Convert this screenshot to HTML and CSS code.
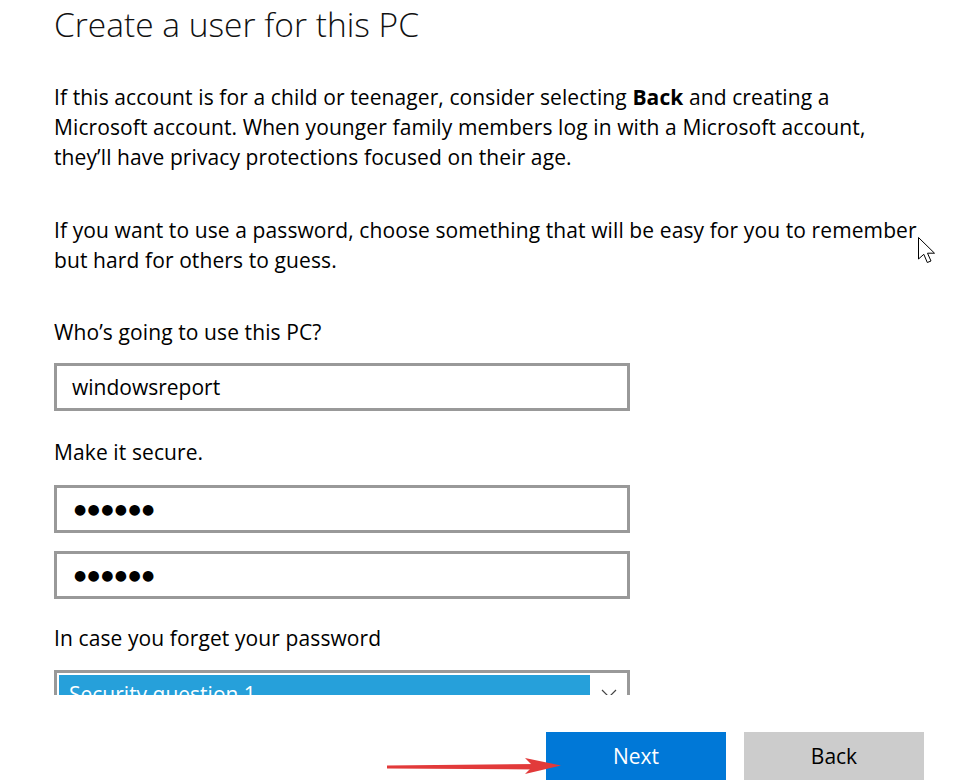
FILE: index.html
```html
<!DOCTYPE html>
<html>
    <head>
        <meta charset="utf-8">
        <title>Create a user for this PC</title>
        <link rel="stylesheet" href="styles.css">
    </head>
    <body>
        <div class="dialog">
            <div class="content">
                <h1 class="title">Create a user for this PC</h1>

                <p class="text">If this account is for a child or teenager, consider selecting <b>Back</b> and creating a<br>
                Microsoft account. When younger family members log in with a Microsoft account,<br>
                they’ll have privacy protections focused on their age.</p>

                <p class="text second">If you want to use a password, choose something that will be easy for you to remember<br>
                but hard for others to guess.</p>

                <div class="label">Who’s going to use this PC?</div>
                <div class="field">windowsreport</div>

                <div class="label">Make it secure.</div>
                <div class="field dots">●●●●●●</div>
                <div class="field dots">●●●●●●</div>

                <div class="label last">In case you forget your password</div>
                <div class="select">
                    <div class="select-value">Security question 1</div>
                    <div class="select-arrow">
                        <svg width="16" height="10" viewBox="0 0 16 10"><path d="M1 1 L8 8 L15 1" fill="none" stroke="#444" stroke-width="1.2"/></svg>
                    </div>
                </div>
            </div>
            <div class="footer">
                <button type="button" class="btn primary">Next</button>
                <button type="button" class="btn">Back</button>
            </div>
        </div>

        <svg class="cursor" width="22" height="30" viewBox="0 0 22 30">
            <path d="M1.5 1.5 L1.5 23 L6.8 18.3 L10.3 26.5 L14 25 L10.5 17.2 L17.5 17.2 Z" fill="#fff" stroke="#000" stroke-width="1" stroke-linejoin="miter"/>
        </svg>

        <svg class="arrow" width="180" height="20" viewBox="0 0 180 20">
            <path d="M0 8.5 L150 7 L150 12.5 L0 11.5 Z" fill="#e23a3a"/>
            <path d="M138 1 L174 8.5 L138 17 L146 9 Z" fill="#e23a3a"/>
        </svg>
    </body>
</html>
```

FILE: styles.css
```css
html, body {
    margin: 0;
    padding: 0;
    background-color: #fff;
    font-family: "Open Sans", "Noto Sans", sans-serif;
    color: #000;
}

.dialog {
    position: relative;
    width: 977px;
    height: 782px;
    display: flex;
    flex-direction: column;
}

.content {
    height: 695px;
    overflow: hidden;
    padding: 0 54px;
    box-sizing: border-box;
}

.title {
    margin: 0;
    padding-top: 4px;
    font-size: 33.5px;
    font-weight: 300;
    line-height: 40px;
    color: #111;
}

.text {
    margin: 38px 0 0;
    font-size: 21px;
    letter-spacing: 0.1px;
    line-height: 30px;
}

.text b {
    font-weight: 700;
}

.text.second {
    margin-top: 43px;
}

.label {
    margin-top: 42px;
    font-size: 21px;
    letter-spacing: 0.1px;
    line-height: 30px;
}

.field {
    margin-top: 16px;
    width: 576px;
    height: 48px;
    box-sizing: border-box;
    border: 3px solid #999;
    padding: 0 15px;
    font-size: 21px;
    line-height: 42px;
}

.field + .label {
    margin-top: 26px;
}

.field + .label.last {
    margin-top: 24px;
}

.dots {
    margin-top: 18px;
    font-family: "DejaVu Sans", sans-serif;
    font-size: 14px;
    letter-spacing: 1.4px;
    padding-left: 17px;
}

.select {
    margin-top: 17px;
    width: 576px;
    height: 60px;
    box-sizing: border-box;
    border: 3px solid #999;
    display: flex;
}

.select-value {
    flex: 1;
    background-color: #26a0da;
    color: #fff;
    font-size: 21px;
    line-height: 38px;
    padding-left: 10px;
    margin: 2px 0 0 2px;
}

.select-arrow {
    width: 37px;
    display: flex;
    justify-content: center;
    padding-top: 16px;
}

.footer {
    display: flex;
    justify-content: flex-end;
    gap: 18px;
    padding: 37px 53px 0 0;
}

.btn {
    width: 180px;
    height: 48px;
    border: none;
    margin: 0;
    background-color: #ccc;
    color: #000;
    font-family: "Open Sans", "Noto Sans", sans-serif;
    font-size: 21px;
}

.btn.primary {
    background-color: #0078d7;
    color: #fff;
}

.cursor {
    position: absolute;
    left: 917px;
    top: 236px;
}

.arrow {
    position: absolute;
    left: 387px;
    top: 757px;
}
```
